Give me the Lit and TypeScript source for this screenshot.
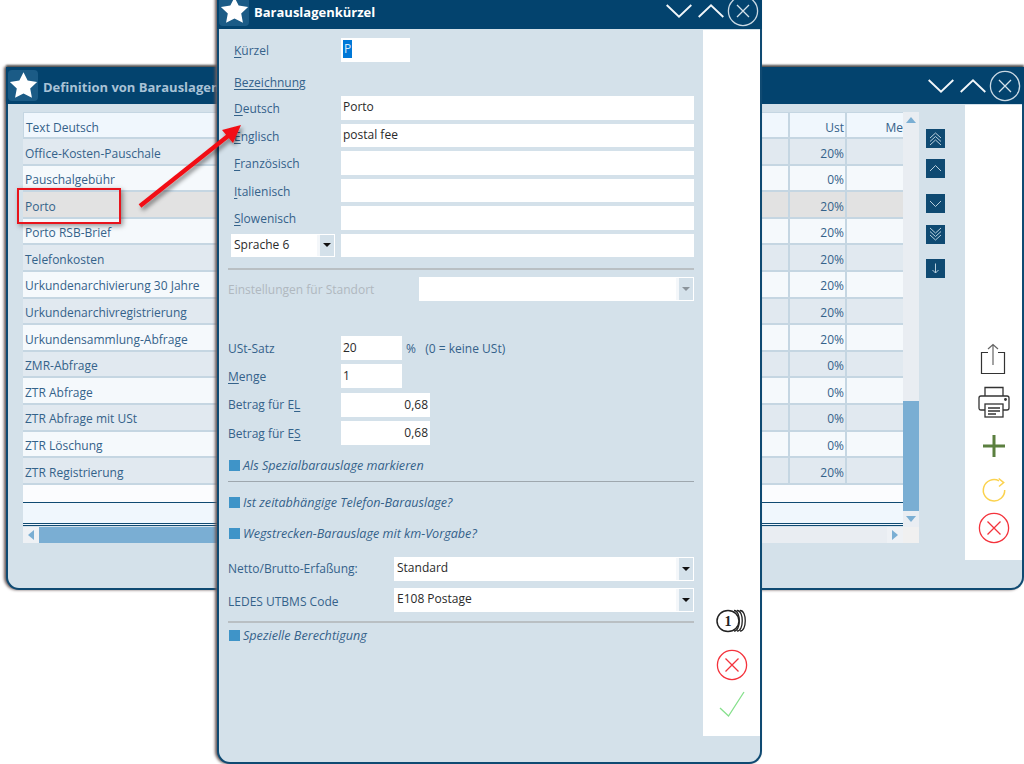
import { LitElement, html, css, svg } from "lit";
import { customElement } from "lit/decorators.js";

const star = html`<svg class="star" viewBox="0 0 32 32"><polygon points="16,1.5 20.6,10.6 31,12.2 23.4,19.4 25.3,29.6 16,24.8 6.7,29.6 8.6,19.4 1,12.2 11.4,10.6" fill="#fff"/></svg>`;
const winBtns = html`<div class="winbtns">
  <svg class="wd" width="26" height="14" viewBox="0 0 26 14"><path d="M.7 1 L13 12.6 L25.3 1" fill="none" stroke="#f2f6f9" stroke-width="1.9"/></svg>
  <svg class="wu" width="26" height="14" viewBox="0 0 26 14"><path d="M.7 13 L13 1.4 L25.3 13" fill="none" stroke="#f2f6f9" stroke-width="1.9"/></svg>
  <svg class="wc" width="32" height="32" viewBox="0 0 32 32"><circle cx="16" cy="16" r="14.6" fill="none" stroke="#c9d8e3" stroke-width="1.3"/><path d="M10 10 L22 22 M22 10 L10 22" stroke="#d5e2ea" stroke-width="1.3"/></svg>
</div>`;
const redX = html`<svg class="ic" viewBox="0 0 32 32"><circle cx="16" cy="16" r="14.6" fill="none" stroke="#f4333c" stroke-width="1.3"/><path d="M9.5 9.5 L22.5 22.5 M22.5 9.5 L9.5 22.5" stroke="#f4333c" stroke-width="1.3"/></svg>`;
const nav = (p: ReturnType<typeof svg>, cls: string) => html`<div class="navbtn ${cls}"><svg width="19" height="19" viewBox="0 0 19 19" fill="none" stroke="#b9cfdd" stroke-width="1">${p}</svg></div>`;
const rows: [string, string][] = [
  ["Office-Kosten-Pauschale", "20%"], ["Pauschalgebühr", "0%"], ["Porto", "20%"], ["Porto RSB-Brief", "20%"],
  ["Telefonkosten", "20%"], ["Urkundenarchivierung 30 Jahre", "20%"], ["Urkundenarchivregistrierung", "20%"],
  ["Urkundensammlung-Abfrage", "20%"], ["ZMR-Abfrage", "0%"], ["ZTR Abfrage", "0%"], ["ZTR Abfrage mit USt", "0%"],
  ["ZTR Löschung", "0%"], ["ZTR Registrierung", "20%"],
];
const langs: [string, string, string][] = [
  ["D", "eutsch", "Porto"], ["E", "nglisch", "postal fee"], ["F", "ranzösisch", ""], ["I", "talienisch", ""], ["S", "lowenisch", ""],
];

@customElement("app-root")
export class AppRoot extends LitElement {
  static styles = css`
    :host { display: block; position: relative; width: 1024px; height: 764px; overflow: hidden; background: #fff; font-family: "Open Sans", sans-serif; font-size: 12px; color: #34628a; }
    * { box-sizing: border-box; }
    .win { position: absolute; display: flex; flex-direction: column; background: #d4e1ea; border: 2px solid #0f4a72; border-top: 0; border-radius: 0 0 13px 13px; box-shadow: -2px 0 3px #6b5b5b; }
    .back { left: 6px; top: 67px; width: 1018px; height: 523px; }
    .front { left: 217px; top: -8px; width: 545px; height: 772px; }
    .head { flex: none; height: 37px; margin: 0 -2px; background: #03436e; display: flex; align-items: center; padding-left: 2px; position: relative; }
    .back .head { box-shadow: 0 -2px 2px #555; }
    .star-box { width: 30px; height: 31px; border-radius: 4px; background: #1b5b86; display: flex; align-items: center; justify-content: center; }
    .star { width: 29px; height: 29px; }
    .title { margin-left: 5px; padding-top: 2px; font-weight: 700; font-size: 13px; white-space: nowrap; color: #fff; }
    .back .title { color: #a9c2d6; }
    .winbtns { margin-left: auto; display: flex; align-items: center; padding-right: 3px; }
    .wu { margin-left: 6px; }
    .wc { margin-left: 3px; }
    .bodyrow { flex: 1; min-height: 0; display: flex; }
    .back .bodyrow { height: 456px; flex: none; padding-left: 15px; padding-top: 1px; }
    .side { background: #fff; display: flex; flex-direction: column; align-items: center; }
    .back .side { width: 57px; margin-left: auto; height: 455px; padding-top: 238px; }
    .front .side { width: 57px; height: 706px; margin-left: auto; margin-top: 1px; padding-top: 575px; }
    .ic { width: 32px; height: 32px; display: block; flex: none; }
    .back .side .ic { margin-bottom: 11.5px; }
    .back .side .ic.share { margin-left: -1px; }
    .back .side .ic.print { margin-top: -1px; margin-bottom: 12.5px; }
    .back .side .ic.last { margin-top: -5px; }
    .front .side .ic { margin-bottom: 12px; }
    .front .side .ic.last { margin-top: -5px; }

    .tablewrap { width: 896px; padding-top: 7px; flex: none; }
    .tablegrid { display: grid; grid-template-columns: 880px 16px; grid-template-rows: 415px 16px; height: 431px; }
    .table { overflow: hidden; }
    .tr { display: grid; grid-template-columns: 1fr 57px 58px; height: 26.6px; border-bottom: 2px solid #c5d6e2; }
    .tr > div { padding: 1.5px 1px 0 2px; line-height: 26px; overflow: hidden; white-space: nowrap; }
    .tr > div + div { text-align: right; border-left: 2px solid #c5d6e2; }
    .tr.hd { background: #f0f7fd; height: 27px; border-top: 1px solid #c5d6e2; }
    .tr.hd > div:first-child { padding-left: 2px; border-left: 1px solid #c5d6e2; }
    .tr:nth-child(even) { background: #e1e9f0; }
    .tr:nth-child(odd):not(.hd) { background: #f5f9fc; }
    .tr.sel { background: #e2e2e2 !important; }
    .tr.hd > div:last-child { padding-right: 0; }
    .blank { height: 18.2px; background: #fbfcfe; border-bottom: 1px solid #0f4a72; }
    .blank2 { height: 20.5px; background: #f0f7fd; }
    .dbl { height: 3px; border-top: 1px solid #0f4a72; border-bottom: 1px solid #0f4a72; background: #f0f7fd; }
    .vs { background: #e9edf2; display: flex; flex-direction: column; }
    .vs .arrowu, .vs .arrowd { height: 16px; display: flex; align-items: center; justify-content: center; }
    .vs .track { flex: 1; display: flex; flex-direction: column; justify-content: flex-end; }
    .vs .thumb { height: 110px; background: #7aaed3; }
    .hs { background: #e9edf2; display: flex; align-items: center; height: 16px; }
    .hs .hthumb { width: 200px; height: 16px; background: #7aaed3; }
    .hs .cap { width: 16px; height: 16px; display: flex; align-items: center; justify-content: center; background: #eef1f5; }
    .hs .spacer { flex: 1; }
    .corner { background: #f0f0f0; }

    .navcol { flex: none; width: 30px; margin-left: 7px; display: flex; flex-direction: column; padding-top: 24px; }
    .navbtn { width: 19px; height: 19px; background: #0f4a72; }
    .n2 { margin-top: 11px; } .n3 { margin-top: 16px; } .n4 { margin-top: 12px; } .n5 { margin-top: 15px; }

    .form { flex: none; width: 484px; padding: 9px 9px 0; display: flex; flex-direction: column; }
    .row { display: flex; align-items: center; height: 24px; }
    .lab { flex: none; white-space: nowrap; }
    .lab u { text-decoration-thickness: 1px; text-underline-offset: 2px; }
    .ind { padding-left: 6px; }
    .w113 { width: 113px; }
    .in { background: #fff; height: 100%; padding: 0 2px; color: #2a2a2a; line-height: 21px; white-space: nowrap; display: flex; flex: none; }
    .grow { flex: 1; }
    .kz { width: 69px; }
    .sel-text { background: #0078d7; color: #d7ebfa; width: 9px; height: 18px; line-height: 18px; margin-top: 2px; padding-left: 1px; }
    .bez { height: 20px; margin-top: 10px; }
    .langs { margin-top: 4px; display: grid; grid-auto-rows: 23.5px; row-gap: 4px; }
    .row.lang { height: 23.5px; }
    .row.lang .lab { padding-top: 2px; }
    .dd { display: flex; background: #fff; height: 100%; color: #2a2a2a; line-height: 21px; padding-left: 3px; }
    .dd .t { flex: 1; white-space: nowrap; }
    .dd .b { flex: none; width: 14px; margin: 1px 1px 1px 0; background: #d4e1ea; display: flex; align-items: center; justify-content: center; box-shadow: -3px 0 0 #f4f7fa; }
    .tri { width: 0; height: 0; border-left: 4px solid transparent; border-right: 4px solid transparent; border-top: 4px solid #111; }
    .dd.off .tri { border-top-color: #8b949b; }
    .sp6 { width: 104px; margin-left: 3px; margin-right: 6px; }
    .hr { height: 2px; background: #b9bfc3; flex: none; }
    .hr1 { margin-top: 10.5px; }
    .hr2 { margin-top: 7.5px; height: 1px; background: #9ea7ae; }
    .hr3 { margin-top: 9px; }
    .stand { margin-top: 7.5px; }
    .dis { color: #b0b8bf; width: 191px; }
    .usts { margin-top: 35px; display: grid; grid-auto-rows: 24px; row-gap: 4.4px; }
    .usts .in { line-height: 23px; }
    .w61 { width: 61px; } .w90 { width: 89px; justify-content: flex-end; }
    .w113b { width: 113px; }
    .pct { margin-left: 4px; padding-top: 1px; white-space: pre; }
    .chk { display: flex; align-items: center; height: 16px; font-style: italic; font-size: 12.6px; white-space: nowrap; }
    .chk i { width: 11px; height: 11px; background: #3f94c8; margin: 0 3px 0 1px; flex: none; }
    .c1 { margin-top: 12.8px; } .c2 { margin-top: 12.5px; } .c3 { margin-top: 15px; } .c4 { margin-top: 5px; }
    .nb { margin-top: 15px; } .nb2 { margin-top: 7px; }
    .w166 { width: 166px; }
    .ledes { padding-top: 3px; }

    .shot { position: absolute; left: 0; top: 0; pointer-events: none; overflow: visible; }
    .redbox { position: absolute; left: 17px; top: 188px; width: 104px; height: 36px; border: 2px solid #e8141c; box-shadow: 2px 2px 5px rgba(0,0,0,.4); }
  `;

  render() {
    return html`
      <div class="win back">
        <div class="head">
          <div class="star-box">${star}</div>
          <div class="title">Definition von Barauslagen</div>
          ${winBtns}
        </div>
        <div class="bodyrow">
          <div class="tablewrap">
            <div class="tablegrid">
              <div class="table">
                <div class="tr hd"><div>Text Deutsch</div><div>Ust</div><div>Me</div></div>
                ${rows.map(([t, u]) => html`<div class="tr ${t === "Porto" ? "sel" : ""}"><div>${t}</div><div>${u}</div><div></div></div>`)}
                <div class="blank"></div>
                <div class="blank2"></div>
                <div class="dbl"></div>
              </div>
              <div class="vs">
                <div class="arrowu"><svg width="10" height="6"><polygon points="5,0 10,6 0,6" fill="#7aaed3"/></svg></div>
                <div class="track"><div class="thumb"></div></div>
                <div class="arrowd"><svg width="10" height="6"><polygon points="0,0 10,0 5,6" fill="#7aaed3"/></svg></div>
              </div>
              <div class="hs">
                <div class="cap"><svg width="6" height="10"><polygon points="6,0 6,10 0,5" fill="#7aaed3"/></svg></div>
                <div class="hthumb"></div>
                <div class="spacer"></div>
                <div class="cap"><svg width="6" height="10"><polygon points="0,0 6,5 0,10" fill="#7aaed3"/></svg></div>
              </div>
              <div class="corner"></div>
            </div>
          </div>
          <div class="navcol">
            ${nav(svg`<path d="M4 9 L9.5 4 L15 9 M4 12.5 L9.5 7.5 L15 12.5 M4 16 L9.5 11 L15 16"/>`, "")}
            ${nav(svg`<path d="M4 12 L9.5 6.5 L15 12"/>`, "n2")}
            ${nav(svg`<path d="M4 7 L9.5 12.5 L15 7"/>`, "n3")}
            ${nav(svg`<path d="M4 3 L9.5 8 L15 3 M4 6.5 L9.5 11.5 L15 6.5 M4 10 L9.5 15 L15 10"/>`, "n4")}
            ${nav(svg`<path d="M9.5 4.5 V14 M6.5 11 L9.5 14 L12.5 11"/>`, "n5")}
          </div>
          <div class="side">
            <svg class="ic share" viewBox="0 0 32 32" fill="none" stroke="#333" stroke-width="1.2"><path d="M11 9.5 H4.5 V30.5 H27.5 V9.5 H21"/><path d="M16 22 V1.5 M11 6 L16 1.5 L21 6" stroke="#666"/></svg>
            <svg class="ic print" viewBox="0 0 32 32" fill="none" stroke="#333" stroke-width="1.3"><path d="M7 10 V1.5 H25 V10"/><path d="M7 24 H3 Q1 24 1 22 V12 Q1 10 3 10 H29 Q31 10 31 12 V22 Q31 24 29 24 H25"/><rect x="7" y="18" width="18" height="13" fill="#fff"/><path d="M10 22 H22 M10 25 H22 M10 28 H18"/><circle cx="27.5" cy="13.5" r="0.8" fill="#333"/></svg>
            <svg class="ic" viewBox="0 0 32 32"><path d="M16 5 V27 M5 16 H27" stroke="#5b7f3f" stroke-width="3"/></svg>
            <svg class="ic" viewBox="0 0 32 32" fill="none" stroke="#fbd24e" stroke-width="1.5"><path d="M21 6.8 A10.7 10.7 0 1 0 26.7 16"/><path d="M20.7 4.5 L25.7 8.6 L21 12.5"/></svg>
            <div class="ic last">${redX}</div>
          </div>
        </div>
      </div>

      <div class="win front">
        <div class="head">
          <div class="star-box">${star}</div>
          <div class="title">Barauslagenkürzel</div>
          ${winBtns}
        </div>
        <div class="bodyrow">
          <div class="form">
            <div class="row">
              <div class="lab ind w113"><u>K</u>ürzel</div>
              <div class="in kz"><div class="sel-text">P</div></div>
            </div>
            <div class="row bez"><div class="lab ind"><u>Bezeichnung</u></div></div>
            <div class="langs">
              ${langs.map(([a, b, v]) => html`<div class="row lang"><div class="lab ind w113"><u>${a}</u>${b}</div><div class="in grow">${v}</div></div>`)}
              <div class="row lang">
                <div class="dd sp6"><div class="t">Sprache 6</div><div class="b"><div class="tri"></div></div></div>
                <div class="in grow"></div>
              </div>
            </div>
            <div class="hr hr1"></div>
            <div class="row stand">
              <div class="lab dis">Einstellungen für Standort</div>
              <div class="dd off grow"><div class="t"></div><div class="b"><div class="tri"></div></div></div>
            </div>
            <div class="usts">
              <div class="row"><div class="lab w113b">USt-Satz</div><div class="in w61">20</div><div class="pct">%   (0 = keine USt)</div></div>
              <div class="row"><div class="lab w113b"><u>M</u>enge</div><div class="in w61">1</div></div>
              <div class="row"><div class="lab w113b">Betrag für E<u>L</u></div><div class="in w90">0,68</div></div>
              <div class="row"><div class="lab w113b">Betrag für E<u>S</u></div><div class="in w90">0,68</div></div>
            </div>
            <div class="chk c1"><i></i>Als Spezialbarauslage markieren</div>
            <div class="hr hr2"></div>
            <div class="chk c2"><i></i>Ist zeitabhängige Telefon-Barauslage?</div>
            <div class="chk c3"><i></i>Wegstrecken-Barauslage mit km-Vorgabe?</div>
            <div class="row nb"><div class="lab w166">Netto/Brutto-Erfaßung:</div><div class="dd grow"><div class="t">Standard</div><div class="b"><div class="tri"></div></div></div></div>
            <div class="row nb2"><div class="lab w166 ledes">LEDES UTBMS Code</div><div class="dd grow"><div class="t">E108 Postage</div><div class="b"><div class="tri"></div></div></div></div>
            <div class="hr hr3"></div>
            <div class="chk c4"><i></i>Spezielle Berechtigung</div>
          </div>
          <div class="side">
            <svg class="ic" viewBox="0 0 32 32" fill="none" stroke="#222" stroke-width="1.3"><path d="M18 5.5 C25 5 25 26.5 18 26"/><path d="M21 5.5 C28 5 28 26.5 21 26"/><path d="M24 5.5 C31 5 31 26.5 24 26"/><ellipse cx="12" cy="16" rx="11" ry="10.5" fill="#fff" stroke-width="1.5"/><text x="12" y="21" text-anchor="middle" font-family="Liberation Serif" font-weight="700" font-size="14" fill="#222" stroke="none">1</text></svg>
            <div class="ic">${redX}</div>
            <svg class="ic last" viewBox="0 0 32 32" fill="none" stroke="#86e08c" stroke-width="1.3"><path d="M4 20 L12.5 28 L28 4"/></svg>
          </div>
        </div>
      </div>

      <div class="redbox"></div>
      <svg class="shot" width="1024" height="764" viewBox="0 0 1024 764">
        <defs><filter id="ds" x="-20%" y="-20%" width="140%" height="140%"><feDropShadow dx="2" dy="3" stdDeviation="2" flood-color="#000" flood-opacity=".45"/></filter></defs>
        <g filter="url(#ds)"><path d="M140 206 L228 136" stroke="#f20d12" stroke-width="4.2" fill="none"/><polygon points="241,125 222,130 233,143" fill="#f20d12"/></g>
      </svg>
    `;
  }
}
